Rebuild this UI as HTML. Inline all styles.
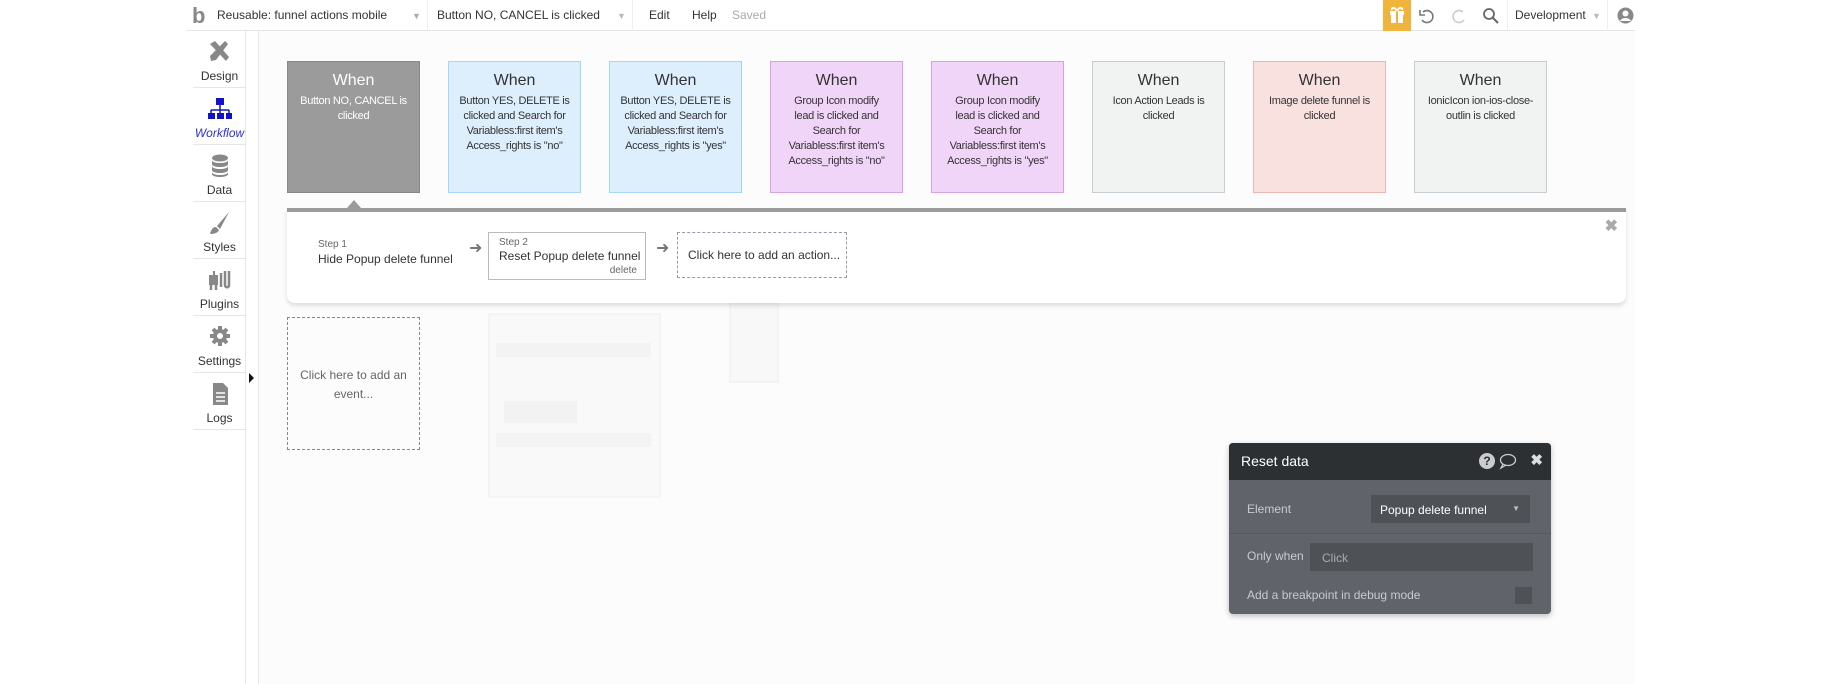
<!DOCTYPE html>
<html><head><meta charset="utf-8"><style>
*{box-sizing:border-box;margin:0;padding:0}
body{width:1830px;height:684px;background:#fff;font-family:"Liberation Sans",sans-serif;position:relative;overflow:hidden;color:#333}
.abs{position:absolute}
.top{left:187px;top:0;width:1448px;height:31px;border-bottom:1px solid #e4e4e4;background:#fff}
.tt{position:absolute;top:8px;font-size:12px;color:#333}
.canvas{left:258px;top:31px;width:1377px;height:653px;background:#fcfcfc;border-left:1px solid #e6e6e6}
.side{left:193px;top:31px;width:53px;height:653px;border-right:1px solid #e6e6e6;background:#fff}
.si{position:absolute;left:0;width:53px;height:57px;border-bottom:1px solid #e6e6e6;text-align:center;font-size:12px;color:#333}
.si span{position:absolute;left:0;right:0;top:38px}
.si svg{position:absolute;left:14px;top:8px}
.card{position:absolute;top:61px;width:133px;height:132px;border:1px solid;text-align:center;color:#333}
.card h4{font-weight:normal;font-size:16px;margin-top:10px}
.card p{font-size:11px;line-height:15px;margin-top:4px;padding:0 3px;letter-spacing:-0.3px}
.bar{left:287px;top:208px;width:1339px;height:95px;background:#fff;border-top:4px solid #9b9b9b;box-shadow:0 3px 4px rgba(0,0,0,.12);border-radius:0 0 8px 8px}
.ghost{position:absolute;background:#f3f3f3;opacity:.6}
</style></head><body>
<div class="abs canvas">
 <div class="ghost" style="left:229px;top:282px;width:173px;height:185px;border:2px solid #f0f0f0;background:#f8f8f8"></div>
 <div class="ghost" style="left:237px;top:312px;width:155px;height:14px;background:#eee"></div>
 <div class="ghost" style="left:245px;top:370px;width:73px;height:22px;background:#ececec"></div>
 <div class="ghost" style="left:237px;top:402px;width:155px;height:14px;background:#eee"></div>
 <div class="ghost" style="left:470px;top:272px;width:50px;height:80px;border:2px solid #eee;background:#f6f6f6"></div>
</div>
<div class="abs top">
 <div class="tt" style="left:5px;top:3px;font-size:22px;color:#888;font-weight:bold">b</div>
 <div class="tt" style="left:30px">Reusable: funnel actions mobile</div>
 <div class="tt" style="left:225px;color:#aaa;font-size:9px;top:11px">▼</div>
 <div class="abs" style="left:240px;top:0;width:1px;height:31px;background:#eee"></div>
 <div class="tt" style="left:250px">Button NO, CANCEL is clicked</div>
 <div class="tt" style="left:430px;color:#bbb;font-size:9px;top:11px">▼</div>
 <div class="abs" style="left:445px;top:0;width:1px;height:31px;background:#eee"></div>
 <div class="tt" style="left:462px">Edit</div>
 <div class="tt" style="left:505px">Help</div>
 <div class="tt" style="left:545px;color:#aaa">Saved</div>
 <div class="abs" style="left:1196px;top:0;width:28px;height:31px;background:#f0b43c"><svg width="28" height="31"><rect x="7" y="11" width="14" height="4" fill="#fff"/><rect x="8" y="15" width="12" height="8" fill="#fff"/><rect x="13" y="11" width="2" height="12" fill="#f0b43c"/><path d="M14 11c-2-4-6-4-5-1M14 11c2-4 6-4 5-1" stroke="#fff" stroke-width="2" fill="none"/></svg></div>
 <svg class="abs" style="left:1230px;top:6px" width="20" height="20"><path d="M6 6a6 6 0 1 1-1 8" stroke="#777" stroke-width="1.6" fill="none"/><path d="M3 4v5h5" stroke="#777" stroke-width="1.6" fill="none"/></svg>
 <svg class="abs" style="left:1262px;top:6px" width="20" height="20"><path d="M14 6a6 6 0 1 0 1 8" stroke="#ccc" stroke-width="1.6" fill="none"/></svg>
 <svg class="abs" style="left:1295px;top:7px" width="18" height="18"><circle cx="7" cy="7" r="5" stroke="#666" stroke-width="1.8" fill="none"/><path d="M11 11l5 5" stroke="#666" stroke-width="2"/></svg>
 <div class="abs" style="left:1320px;top:0;width:1px;height:31px;background:#eee"></div>
 <div class="tt" style="left:1328px">Development</div>
 <div class="tt" style="left:1405px;color:#bbb;font-size:9px;top:11px">▼</div>
 <div class="abs" style="left:1420px;top:0;width:1px;height:31px;background:#eee"></div>
 <svg class="abs" style="left:1430px;top:7px" width="17" height="17"><circle cx="8.5" cy="8.5" r="8" fill="#888"/><circle cx="8.5" cy="6.5" r="3" fill="#fff"/><path d="M3 14c2-4 9-4 11 0" fill="#fff"/></svg>
</div>
<div class="abs side">
 <div class="si" style="top:0"><svg width="24" height="24"><path d="M3 5l5-3 14 16-3 4z" fill="#888"/><path d="M21 5l-3-3-15 15 1 5 5-1z" fill="#888"/></svg><span>Design</span></div>
 <div class="si" style="top:57px;color:#2f2fd3;font-style:italic"><svg width="26" height="26"><rect x="9" y="2" width="8" height="7" fill="#1212c8"/><path d="M13 9v5M4 14h18M4 14v4M13 14v4M22 14v4" stroke="#1212c8" stroke-width="1.5"/><rect x="1" y="17" width="7" height="6" fill="#1212c8"/><rect x="10" y="17" width="7" height="6" fill="#1212c8"/><rect x="19" y="17" width="6" height="6" fill="#1212c8"/></svg><span>Workflow</span></div>
 <div class="si" style="top:114px"><svg width="26" height="26"><ellipse cx="13" cy="5" rx="8" ry="3.5" fill="#888"/><path d="M5 7v4c0 4 16 4 16 0V7c0 4-16 4-16 0zM5 13v4c0 4 16 4 16 0v-4c0 4-16 4-16 0zM5 19v2c0 4 16 4 16 0v-2c0 4-16 4-16 0z" fill="#888"/></svg><span>Data</span></div>
 <div class="si" style="top:171px"><svg width="26" height="26"><path d="M22 2L10 16l3 3z" fill="#888"/><path d="M9 17c-4 0-5 4-6 7 4 0 8-1 9-4z" fill="#888"/></svg><span>Styles</span></div>
 <div class="si" style="top:228px"><svg width="26" height="26"><rect x="2" y="8" width="9" height="10" fill="#888"/><path d="M4 18v5M9 18v5M14 6v14M18 4v14c0 3 4 3 4 0V4" stroke="#888" stroke-width="2.5" fill="none"/><rect x="6" y="4" width="2" height="4" fill="#888"/></svg><span>Plugins</span></div>
 <div class="si" style="top:285px"><svg width="26" height="26"><circle cx="13" cy="12" r="7" fill="#888"/><path d="M13 2v20M3 12h20M6 5l14 14M20 5L6 19" stroke="#888" stroke-width="4"/><circle cx="13" cy="12" r="3" fill="#fff"/></svg><span>Settings</span></div>
 <div class="si" style="top:342px"><svg width="26" height="26"><path d="M6 2h10l5 5v17H6z" fill="#888"/><path d="M9 12h9M9 16h9M9 20h9" stroke="#fff" stroke-width="1.5"/></svg><span>Logs</span></div>
</div>
<div class="abs" style="left:249px;top:373px;width:0;height:0;border-top:5px solid transparent;border-bottom:5px solid transparent;border-left:5px solid #111"></div>

<div class="card" style="left:287px;background:#9b9b9b;border-color:#888;color:#fff"><h4>When</h4><p>Button NO, CANCEL is clicked</p></div>
<div class="card" style="left:448px;background:#ddeefc;border-color:#a6d6f7"><h4>When</h4><p>Button YES, DELETE is clicked and Search for Variabless:first item's Access_rights is "no"</p></div>
<div class="card" style="left:609px;background:#ddeefc;border-color:#a6d6f7"><h4>When</h4><p>Button YES, DELETE is clicked and Search for Variabless:first item's Access_rights is "yes"</p></div>
<div class="card" style="left:770px;background:#f1d5f8;border-color:#d8a0e6"><h4>When</h4><p>Group Icon modify<br>lead is clicked and<br>Search for<br>Variabless:first item's<br>Access_rights is "no"</p></div>
<div class="card" style="left:931px;background:#f1d5f8;border-color:#d8a0e6"><h4>When</h4><p>Group Icon modify<br>lead is clicked and<br>Search for<br>Variabless:first item's<br>Access_rights is "yes"</p></div>
<div class="card" style="left:1092px;background:#f1f3f2;border-color:#c5ccd2"><h4>When</h4><p>Icon Action Leads is clicked</p></div>
<div class="card" style="left:1253px;background:#f9e1e0;border-color:#eeb5b2"><h4>When</h4><p>Image delete funnel is clicked</p></div>
<div class="card" style="left:1414px;background:#f1f3f2;border-color:#c5ccd2"><h4>When</h4><p>IonicIcon ion-ios-close-outlin is clicked</p></div>
<div class="abs" style="left:347px;top:200px;width:0;height:0;border-left:7px solid transparent;border-right:7px solid transparent;border-bottom:8px solid #9b9b9b"></div>

<div class="abs bar">
 <div class="abs" style="left:31px;top:27px;font-size:10px;color:#666">Step 1</div>
 <div class="abs" style="left:31px;top:40px;font-size:12px">Hide Popup delete funnel</div>
 <div class="abs" style="left:182px;top:26px;font-size:16px;color:#777">➜</div>
 <div class="abs" style="left:201px;top:20px;width:158px;height:48px;border:1px solid #bbb;background:#fff">
  <div class="abs" style="left:10px;top:4px;font-size:10px;color:#666">Step 2</div>
  <div class="abs" style="left:10px;top:16px;font-size:12px;white-space:nowrap">Reset Popup delete funnel</div>
  <div class="abs" style="right:8px;top:32px;font-size:10px;color:#666">delete</div>
 </div>
 <div class="abs" style="left:369px;top:26px;font-size:16px;color:#777">➜</div>
 <div class="abs" style="left:390px;top:20px;width:170px;height:46px;border:1px dashed #99a;font-size:12px;padding:15px 10px;white-space:nowrap">Click here to add an action...</div>
 <div class="abs" style="right:8px;top:4px;font-size:16px;color:#aaa;font-weight:bold">✖</div>
</div>

<div class="abs" style="left:287px;top:317px;width:133px;height:133px;border:1px dashed #888;text-align:center;font-size:12px;color:#666;line-height:19px;padding-top:48px">Click here to add an<br>event...</div>

<div class="abs" style="left:1229px;top:443px;width:322px;height:171px;background:#60646a;border-radius:4px;box-shadow:0 2px 6px rgba(0,0,0,.25);overflow:hidden">
 <div style="height:37px;background:#2c3033;color:#fff;font-size:14px;padding:10px 12px;position:relative">Reset data
  <div class="abs" style="right:56px;top:10px;width:16px;height:16px;border-radius:50%;background:#ccc;color:#2c3033;font-size:12px;font-weight:bold;text-align:center;line-height:16px">?</div>
  <svg class="abs" style="right:34px;top:10px" width="18" height="17"><ellipse cx="9" cy="7" rx="7.5" ry="5.5" stroke="#ccc" stroke-width="1.3" fill="none"/><path d="M4 11l-2 4 5-3" stroke="#ccc" stroke-width="1.3" fill="none"/></svg>
  <div class="abs" style="right:8px;top:8px;font-size:15px;color:#ddd;font-weight:bold">✖</div>
 </div>
 <div class="abs" style="left:18px;top:59px;font-size:12px;color:#c8cacc">Element</div>
 <div class="abs" style="left:142px;top:52px;width:159px;height:28px;background:#4e5257;color:#fff;font-size:12px;padding:8px 9px">Popup delete funnel<span style="position:absolute;right:10px;top:9px;font-size:8px;color:#bbb">▼</span></div>
 <div class="abs" style="left:0;top:90px;width:322px;height:1px;background:#555a5f"></div>
 <div class="abs" style="left:18px;top:106px;font-size:12px;color:#c8cacc">Only when</div>
 <div class="abs" style="left:81px;top:100px;width:223px;height:28px;background:#4e5257;font-size:12px;color:#aaa;padding:8px 12px">Click</div>
 <div class="abs" style="left:18px;top:145px;font-size:12px;color:#c8cacc">Add a breakpoint in debug mode</div>
 <div class="abs" style="left:286px;top:144px;width:17px;height:17px;background:#4e5257"></div>
</div>
</body></html>
